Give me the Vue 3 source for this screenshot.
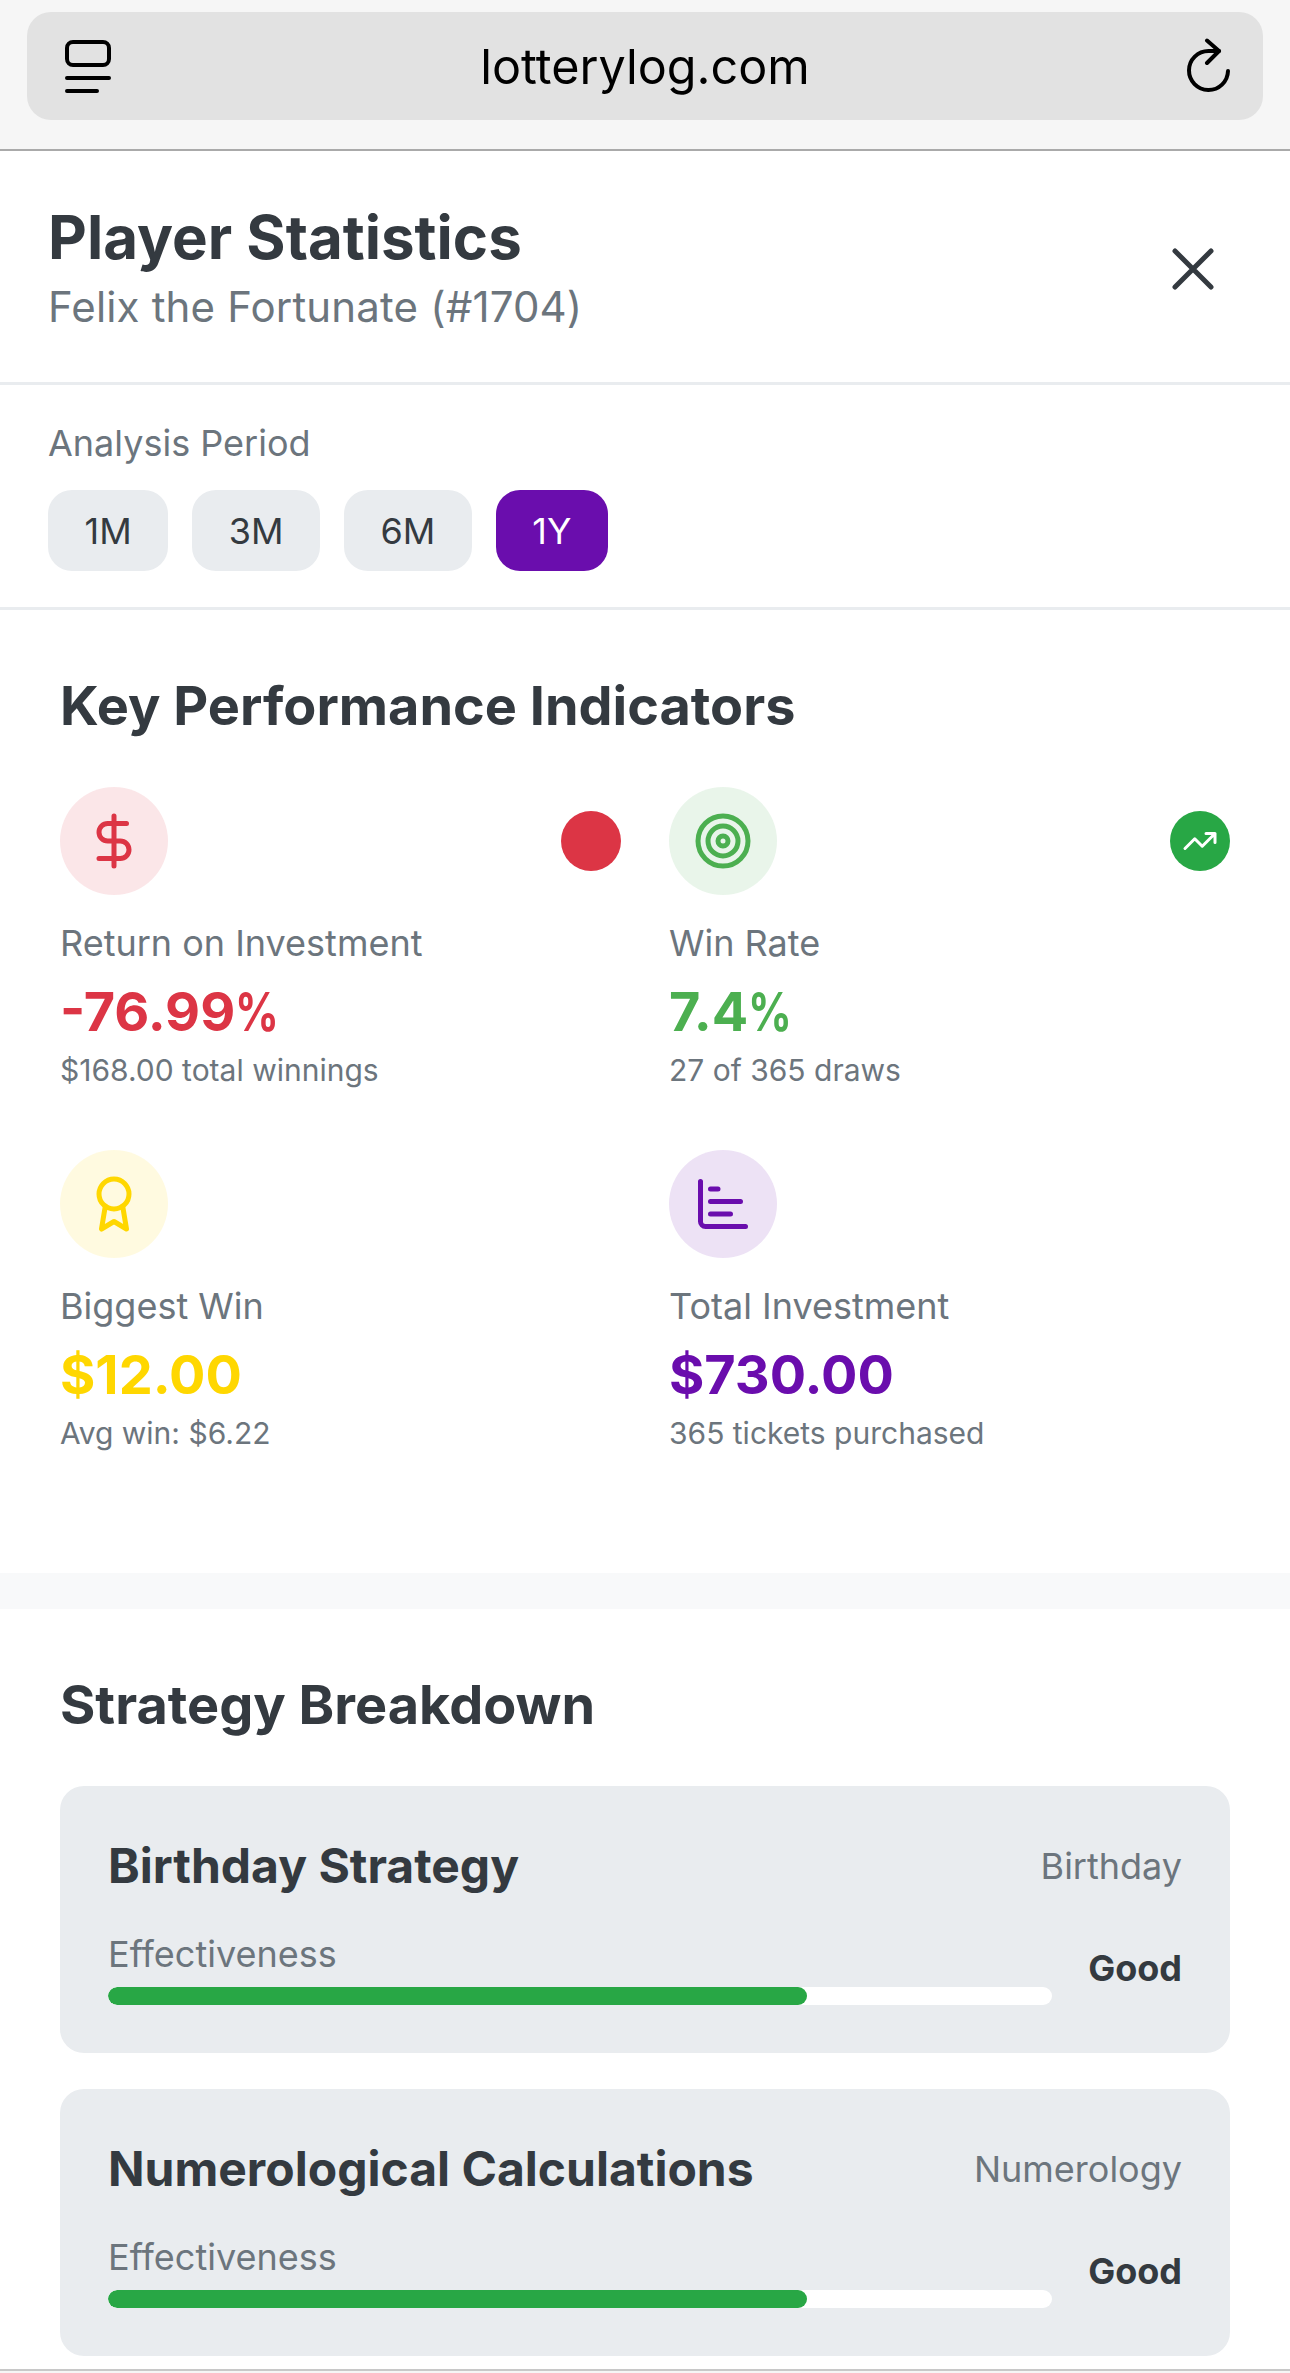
<script setup>
const kpis = [
  { id: 'roi', tone: 'red', label: 'Return on Investment', value: '-76.99', unit: '%', sub: '$168.00 total winnings', trend: 'down' },
  { id: 'rate', tone: 'green', label: 'Win Rate', value: '7.4', unit: '%', sub: '27 of 365 draws', trend: 'up' },
  { id: 'big', tone: 'yellow', label: 'Biggest Win', value: '$12.00', sub: 'Avg win: $6.22' },
  { id: 'total', tone: 'purple', label: 'Total Investment', value: '$730.00', sub: '365 tickets purchased' }
]

const periods = ['1M', '3M', '6M', '1Y']

const strategies = [
  { name: 'Birthday Strategy', tag: 'Birthday', rating: 'Good', score: 74 },
  { name: 'Numerological Calculations', tag: 'Numerology', rating: 'Good', score: 74 }
]
</script>

<template>
  <div class="page">
    <div class="browser">
      <div class="url-bar">
        <svg class="tabs-icon" viewBox="0 0 46 54" fill="none" stroke="#000" stroke-width="4" stroke-linecap="round">
          <rect x="2" y="3" width="42" height="23" rx="6" />
          <path d="M2 39h42M2 52h30" />
        </svg>
        <span class="url">lotterylog.com</span>
        <svg class="reload-icon" viewBox="0 0 48 56" fill="none" stroke="#000" stroke-width="4" stroke-linecap="round" stroke-linejoin="round">
          <path d="M43 33a19.5 19.5 0 1 1-19.5-20H34" />
          <path d="M22 2.5L34 13 22 25" />
        </svg>
      </div>
    </div>

    <header class="head">
      <div>
        <h1>Player Statistics</h1>
        <p>Felix the Fortunate (#1704)</p>
      </div>
      <svg class="close" viewBox="0 0 42 42" fill="none" stroke="#343a40" stroke-width="5" stroke-linecap="round">
        <path d="M3 3l36 36M39 3L3 39" />
      </svg>
    </header>

    <section class="period">
      <div class="period-label">Analysis Period</div>
      <div class="period-btns">
        <button v-for="p in periods" :key="p" :class="{ active: p === '1Y' }">{{ p }}</button>
      </div>
    </section>

    <section class="block kpi-block">
      <h2>Key Performance Indicators</h2>
      <div class="kpi-grid">
        <div v-for="k in kpis" :key="k.id" class="kpi" :class="k.tone">
          <div class="kpi-top">
            <div class="kpi-icon">
              <svg v-if="k.id === 'roi'" viewBox="0 0 24 24" fill="none" stroke="currentColor" stroke-width="2" stroke-linecap="round" stroke-linejoin="round">
                <path d="M12 2v20M17 5H9.5a3.5 3.5 0 0 0 0 7h5a3.5 3.5 0 0 1 0 7H6" />
              </svg>
              <svg v-else-if="k.id === 'rate'" viewBox="0 0 24 24" fill="none" stroke="currentColor" stroke-width="2" stroke-linecap="round" stroke-linejoin="round">
                <circle cx="12" cy="12" r="10" />
                <circle cx="12" cy="12" r="6" />
                <circle cx="12" cy="12" r="2" />
              </svg>
              <svg v-else-if="k.id === 'big'" viewBox="0 0 24 24" fill="none" stroke="currentColor" stroke-width="2" stroke-linecap="round" stroke-linejoin="round">
                <circle cx="12" cy="8" r="6" />
                <path d="M15.48 12.89L17 22l-5-3-5 3 1.52-9.12" />
              </svg>
              <svg v-else viewBox="0 0 24 24" fill="none" stroke="currentColor" stroke-width="2" stroke-linecap="round" stroke-linejoin="round">
                <path d="M3 3v16a2 2 0 0 0 2 2h16M7 16h8M7 11h12M7 6h3" />
              </svg>
            </div>
            <div v-if="k.trend" class="trend">
              <svg v-if="k.trend === 'up'" viewBox="0 0 24 24" fill="none" stroke="#fff" stroke-width="2" stroke-linecap="round" stroke-linejoin="round">
                <path d="M22 7l-8.5 8.5-5-5L2 17M16 7h6v6" />
              </svg>
            </div>
          </div>
          <div class="kpi-label">{{ k.label }}</div>
          <div class="kpi-value">{{ k.value }}<span v-if="k.unit" class="unit">{{ k.unit }}</span></div>
          <div class="kpi-sub">{{ k.sub }}</div>
        </div>
      </div>
    </section>

    <section class="block strategy-block">
      <h2>Strategy Breakdown</h2>
      <div class="strategy-list">
        <div v-for="s in strategies" :key="s.name" class="strategy">
          <div class="strategy-head">
            <h3>{{ s.name }}</h3>
            <span>{{ s.tag }}</span>
          </div>
          <div class="strategy-row">
            <div class="meter">
              <div class="meter-label">Effectiveness</div>
              <div class="meter-track">
                <div class="meter-fill" :style="{ width: s.score + '%' }"></div>
              </div>
            </div>
            <strong>{{ s.rating }}</strong>
          </div>
        </div>
      </div>
    </section>
    <div class="end-line"></div>
  </div>
</template>

<style>
html, body {
  background: #fff;
}
</style>

<style scoped>
.page {
  width: 1290px;
  height: 2373px;
  overflow: hidden;
  background: #fff;
  color: #343a40;
  font-family: Inter, "Liberation Sans", sans-serif;
}
.browser {
  height: 151px;
  padding: 12px 27px 0;
  box-sizing: border-box;
  background: #f6f6f6;
  border-bottom: 2px solid #aaa;
}
.url-bar {
  height: 108px;
  padding: 0 30px 0 38px;
  display: flex;
  align-items: center;
  justify-content: space-between;
  background: #e2e2e2;
  border-radius: 24px;
}
.tabs-icon {
  width: 46px;
  height: 54px;
}
.reload-icon {
  width: 48px;
  height: 56px;
}
.url {
  margin-right: 6px;
  font-size: 48.5px;
  color: #000;
}
.head {
  height: 234px;
  padding: 4px 48px 0;
  box-sizing: border-box;
  display: flex;
  align-items: center;
  justify-content: space-between;
  border-bottom: 3px solid #e9ecef;
}
.head h1 {
  margin: 0;
  font-size: 60px;
  line-height: 72px;
  font-weight: 700;
}
.head p {
  margin: 4px 0 0;
  font-size: 42px;
  line-height: 60px;
  letter-spacing: 0.16px;
  color: #6c757d;
}
.close {
  width: 42px;
  height: 42px;
  margin-right: 28px;
}
.period {
  height: 225px;
  padding: 34px 48px 0;
  box-sizing: border-box;
  border-bottom: 3px solid #e9ecef;
}
.period-label {
  font-size: 36px;
  line-height: 48px;
  color: #6c757d;
  margin-bottom: 23px;
}
.period-btns {
  display: flex;
  gap: 24px;
}
.period-btns button {
  height: 81px;
  padding: 0 36.5px;
  border: 0;
  border-radius: 24px;
  background: #e9ecef;
  color: #343a40;
  font-family: inherit;
  font-size: 36px;
}
.period-btns button.active {
  background: #6a0dad;
  color: #fff;
}
.block {
  padding: 63px 60px 0;
}
.block h2 {
  margin: 0 0 48px;
  font-size: 54px;
  line-height: 66px;
  font-weight: 700;
}
.kpi-block {
  height: 963px;
  box-sizing: border-box;
}
.kpi-grid {
  display: grid;
  grid-template-columns: 1fr 1fr;
  gap: 57px 48px;
}
.kpi-top {
  display: flex;
  align-items: center;
  justify-content: space-between;
  margin-bottom: 21px;
}
.kpi-icon {
  width: 108px;
  height: 108px;
  border-radius: 50%;
  display: flex;
  align-items: center;
  justify-content: center;
}
.kpi-icon svg {
  width: 60px;
  height: 60px;
}
.trend {
  width: 60px;
  height: 60px;
  border-radius: 50%;
  display: flex;
  align-items: center;
  justify-content: center;
}
.trend svg {
  width: 36px;
  height: 36px;
}
.kpi-label {
  font-size: 36px;
  line-height: 54px;
  color: #6c757d;
}
.kpi-value {
  margin: 3px 0 -3px;
  font-size: 54px;
  line-height: 78px;
  font-weight: 700;
}
.unit {
  display: inline-block;
  transform: scaleX(0.8);
  transform-origin: left center;
}
.kpi-sub {
  font-size: 30px;
  line-height: 45px;
  color: #6c757d;
}
.red .kpi-icon { background: rgba(220, 53, 69, 0.12); color: #dc3545; }
.red .kpi-value { color: #dc3545; }
.red .trend { background: #dc3545; }
.green .kpi-icon { background: rgba(76, 175, 80, 0.12); color: #4caf50; }
.green .kpi-value { color: #4caf50; }
.green .trend { background: #28a745; }
.yellow .kpi-icon { background: rgba(255, 215, 0, 0.12); color: #ffd700; }
.yellow .kpi-value { color: #ffd700; }
.purple .kpi-icon { background: rgba(106, 13, 173, 0.12); color: #6a0dad; }
.purple .kpi-value { color: #6a0dad; }
.strategy-block {
  padding-bottom: 13px;
  border-top: 36px solid #f8f9fa;
}
.strategy-list {
  display: flex;
  flex-direction: column;
  gap: 36px;
}
.strategy {
  height: 267px;
  padding: 50px 48px 0;
  box-sizing: border-box;
  background: #e9ecef;
  border-radius: 24px;
}
.strategy-head {
  display: flex;
  align-items: center;
  justify-content: space-between;
  margin-bottom: 34px;
}
.strategy-head h3 {
  margin: 0;
  font-size: 48px;
  line-height: 60px;
  font-weight: 700;
}
.strategy-head span {
  font-size: 36px;
  color: #6c757d;
}
.strategy-row {
  display: flex;
  align-items: center;
  gap: 36px;
}
.meter {
  flex: 1;
}
.meter-label {
  font-size: 36px;
  line-height: 48px;
  color: #6c757d;
  margin-bottom: 9px;
}
.meter-track {
  height: 18px;
  border-radius: 9px;
  background: #fff;
  overflow: hidden;
}
.meter-fill {
  height: 100%;
  border-radius: 9px;
  background: #28a745;
}
.strategy-row strong {
  font-size: 36px;
  font-weight: 700;
}
.end-line {
  height: 4px;
  border-top: 2px solid #c8c8c8;
  background: #f6f6f6;
}
</style>
